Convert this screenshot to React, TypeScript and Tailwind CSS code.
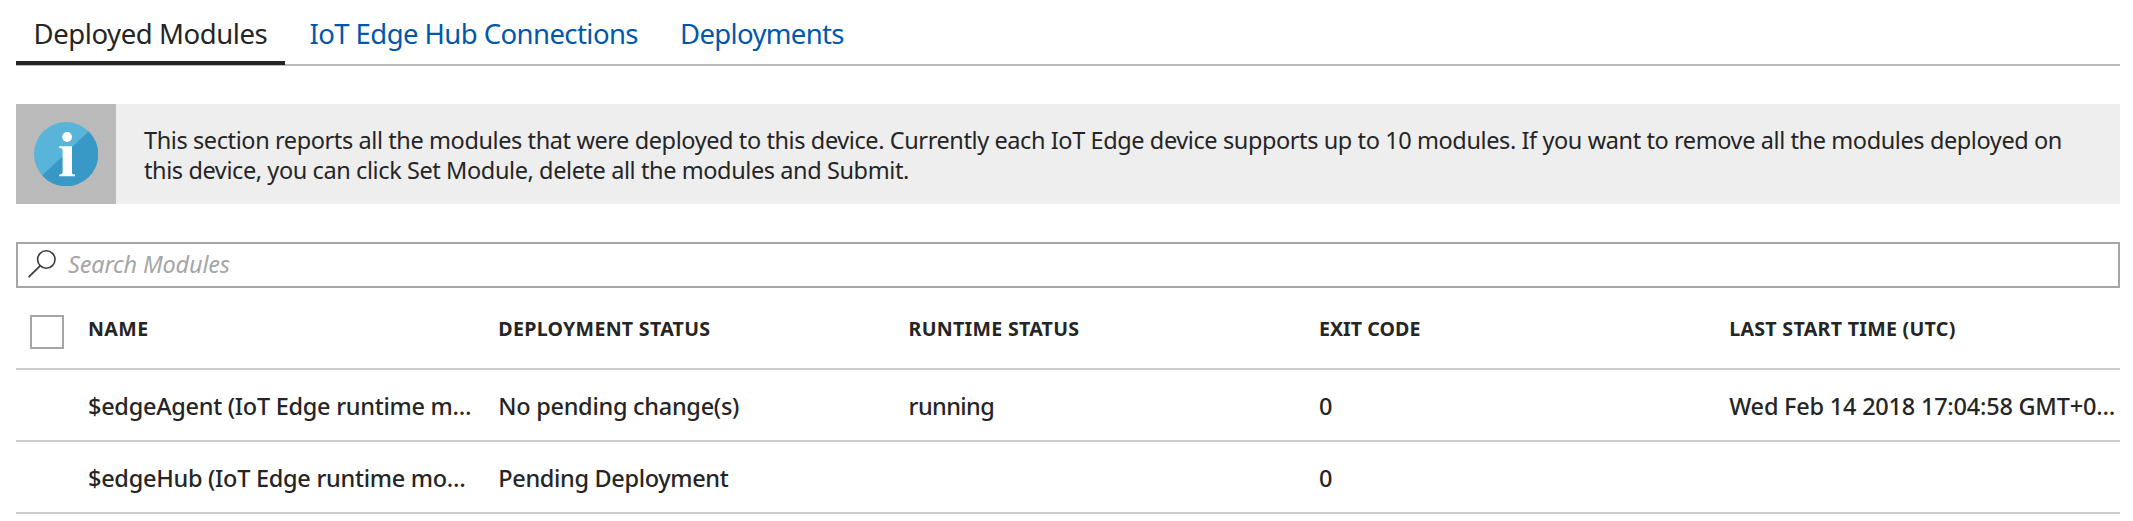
const columns = [
  { title: "NAME", spacing: "tracking-[0.4px]" },
  { title: "DEPLOYMENT STATUS", spacing: "tracking-[0.286px]" },
  { title: "RUNTIME STATUS", spacing: "tracking-[0.277px]" },
  { title: "EXIT CODE", spacing: "tracking-[0.044px]" },
  { title: "LAST START TIME (UTC)", spacing: "tracking-[0.292px]" },
];

type Cell = { text: string; spacing: string };

const rows: Cell[][] = [
  [
    { text: "$edgeAgent (IoT Edge runtime m…", spacing: "tracking-[-0.28px]" },
    { text: "No pending change(s)", spacing: "tracking-[-0.28px]" },
    { text: "running", spacing: "tracking-[-0.6px]" },
    { text: "0", spacing: "tracking-normal" },
    { text: "Wed Feb 14 2018 17:04:58 GMT+0…", spacing: "tracking-[-0.22px]" },
  ],
  [
    { text: "$edgeHub (IoT Edge runtime mo…", spacing: "tracking-[-0.28px]" },
    { text: "Pending Deployment", spacing: "tracking-[-0.34px]" },
    { text: "", spacing: "tracking-normal" },
    { text: "0", spacing: "tracking-normal" },
    { text: "", spacing: "tracking-normal" },
  ],
];

function InfoIcon() {
  return (
    <svg width="64" height="64" viewBox="0 0 64 64" aria-hidden="true">
      <circle cx="32" cy="32" r="32" fill="#59b4d9" />
      <path d="M54.6 9.4A32 32 0 1 1 8.2 53.4Z" fill="#3999c6" />
      <circle cx="33.1" cy="15" r="4.9" fill="#fff" />
      <path d="M25.2 24.3H38v26.6c0 1 .6 1.4 3 1.7v1.7H25.2v-1.7c2.6-.3 3.4-.8 3.4-2V28c0-1.3-.9-1.8-3.4-2Z" fill="#fff" />
    </svg>
  );
}

function SearchIcon() {
  return (
    <svg className="shrink-0" width="28" height="28" viewBox="0 0 28 28" fill="none" stroke="#3c3c3c" strokeWidth="1.6" aria-hidden="true">
      <circle cx="18.3" cy="9.5" r="8.7" />
      <path d="M12.1 15.9 0.6 27.2" strokeWidth="1.8" />
    </svg>
  );
}

function Tabs() {
  return (
    <nav className="flex h-[66px] border-b-2 border-[#bababa] text-[27.5px] leading-[68px] whitespace-nowrap text-[#0058ad]">
      <a className="z-10 h-[65px] w-[269px] border-b-4 border-[#252525] pl-[17.5px] tracking-[-0.42px] text-[#252525]">Deployed Modules</a>
      <a className="ml-[24.5px] w-[370.5px] tracking-[-0.57px]">IoT Edge Hub Connections</a>
      <a className="tracking-[-0.66px]">Deployments</a>
    </nav>
  );
}

export default function App() {
  return (
    <main className="h-[521px] overflow-hidden bg-white pr-[13px] pl-4 font-['Noto_Sans',sans-serif] text-[#252525]">
      <Tabs />

      <section className="mt-[38px] flex h-[100px] bg-[#eeeeee]">
        <div className="flex w-[100px] shrink-0 items-center justify-center bg-[#bababa]">
          <InfoIcon />
        </div>
        <p className="pt-[21px] pr-10 pl-7 text-[23.5px] leading-[30px] tracking-[-0.404px]">
          This section reports all the modules that were deployed to this device. Currently each IoT Edge device supports up to 10 modules. If you want to remove all the modules deployed on this device, you can click Set Module, delete all the modules and Submit.
        </p>
      </section>

      <label className="mt-[38px] flex h-[46px] items-start border-2 border-[#a6a6a6] pl-2.5">
        <span className="mt-1.5">
          <SearchIcon />
        </span>
        <input
          className="ml-3 h-10 grow text-[23.5px] leading-[40px] tracking-[-0.18px] outline-none placeholder:text-[#a6a6a6] placeholder:italic"
          placeholder="Search Modules"
        />
      </label>

      <div className="flex h-[82px] border-b-2 border-[#cccccc]">
        <span className="mt-[27px] ml-3.5 h-[34px] w-[34px] shrink-0 border-2 border-[#a6a6a6]" />
        <div className="ml-6 grid grid-cols-[410.3px_410.3px_410.3px_410.3px_1fr] text-[19.6px] leading-[81px] font-bold whitespace-nowrap">
          {columns.map((column) => (
            <span key={column.title} className={column.spacing}>{column.title}</span>
          ))}
        </div>
      </div>

      {rows.map((row) => (
        <div
          key={row[0].text}
          className="grid h-[72px] grid-cols-[410.3px_410.3px_410.3px_410.3px_1fr] border-b-2 border-[#cccccc] pl-[72px] text-[23.5px] leading-[72px] font-medium whitespace-nowrap"
        >
          {row.map((cell, index) => (
            <span key={index} className={cell.spacing}>{cell.text}</span>
          ))}
        </div>
      ))}
    </main>
  );
}
